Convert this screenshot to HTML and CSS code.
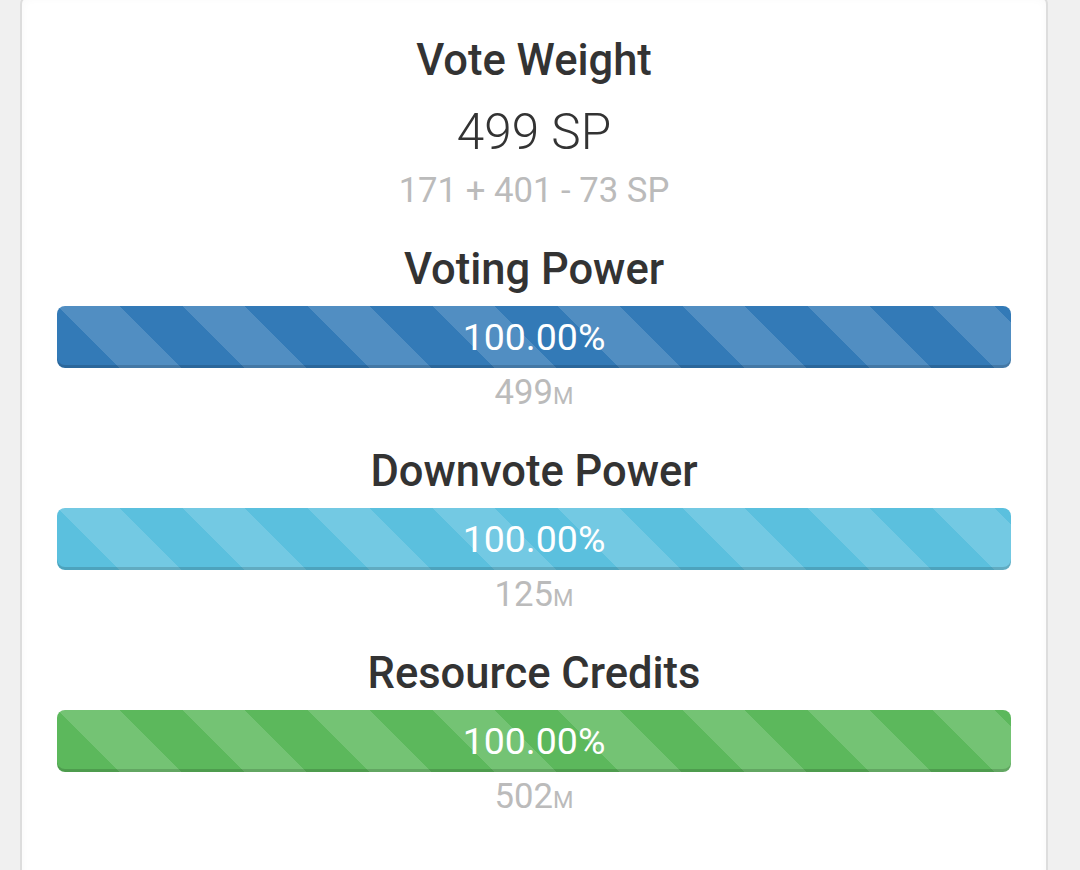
FILE: index.html
```html
<!DOCTYPE html>
<html>
<head>
<meta charset="utf-8">
<link rel="stylesheet" href="styles.css">
</head>
<body>
<div class="card">
  <div class="summary">
    <div class="title">Vote Weight</div>
    <div class="big">499 SP</div>
    <div class="sub">171 + 401 - 73 SP</div>
  </div>
  <div class="meter">
    <div class="title">Voting Power</div>
    <div class="bar bar-blue"><span>100.00%</span></div>
    <div class="amount">499<small>M</small></div>
  </div>
  <div class="meter">
    <div class="title">Downvote Power</div>
    <div class="bar bar-cyan"><span>100.00%</span></div>
    <div class="amount">125<small>M</small></div>
  </div>
  <div class="meter">
    <div class="title">Resource Credits</div>
    <div class="bar bar-green"><span>100.00%</span></div>
    <div class="amount">502<small>M</small></div>
  </div>
</div>
</body>
</html>
```
FILE: styles.css
```css
html, body {
  margin: 0;
  padding: 0;
}
body {
  background: #f0f0f0;
  font-family: Roboto, "Noto Sans", sans-serif;
  height: 870px;
  overflow: hidden;
}
.card {
  margin: -4px 32px 0 20px;
  background: #fff;
  border: 2px solid #dddddd;
  border-radius: 8px;
  box-shadow: inset 0 0 10px rgba(0,0,0,0.03);
  padding: 41px 35px 60px;
  height: 900px;
  box-sizing: border-box;
  text-align: center;
  color: #333;
}
.title {
  font-size: 43.5px;
  line-height: 44px;
  font-weight: 500;
  color: #333;
}
.big {
  margin-top: 23px;
  font-size: 49.5px;
  line-height: 52px;
  font-weight: 300;
  color: #333;
}
.sub {
  margin-top: 13px;
  font-size: 34.7px;
  line-height: 38px;
  color: #bbb;
}
.meter {
  margin-top: 39px;
}
.meter + .meter {
  margin-top: 35px;
}
.bar {
  margin-top: 14px;
  height: 62px;
  border-radius: 8px;
  display: flex;
  align-items: center;
  justify-content: center;
  color: #fff;
  font-size: 37.5px;
  box-shadow: inset 0 -3px 0 rgba(0,0,0,0.15);
  background-image: linear-gradient(45deg, rgba(255,255,255,.15) 25%, transparent 25%, transparent 50%, rgba(255,255,255,.15) 50%, rgba(255,255,255,.15) 75%, transparent 75%, transparent);
  background-size: 125px 125px;
}
.bar-blue { background-color: #337ab7; }
.bar-cyan { background-color: #5bc0de; }
.bar-green { background-color: #5cb85c; }
.amount {
  margin-top: 5px;
  font-size: 34.7px;
  line-height: 38px;
  color: #bbb;
}
.amount small {
  font-size: 23.5px;
}
```
